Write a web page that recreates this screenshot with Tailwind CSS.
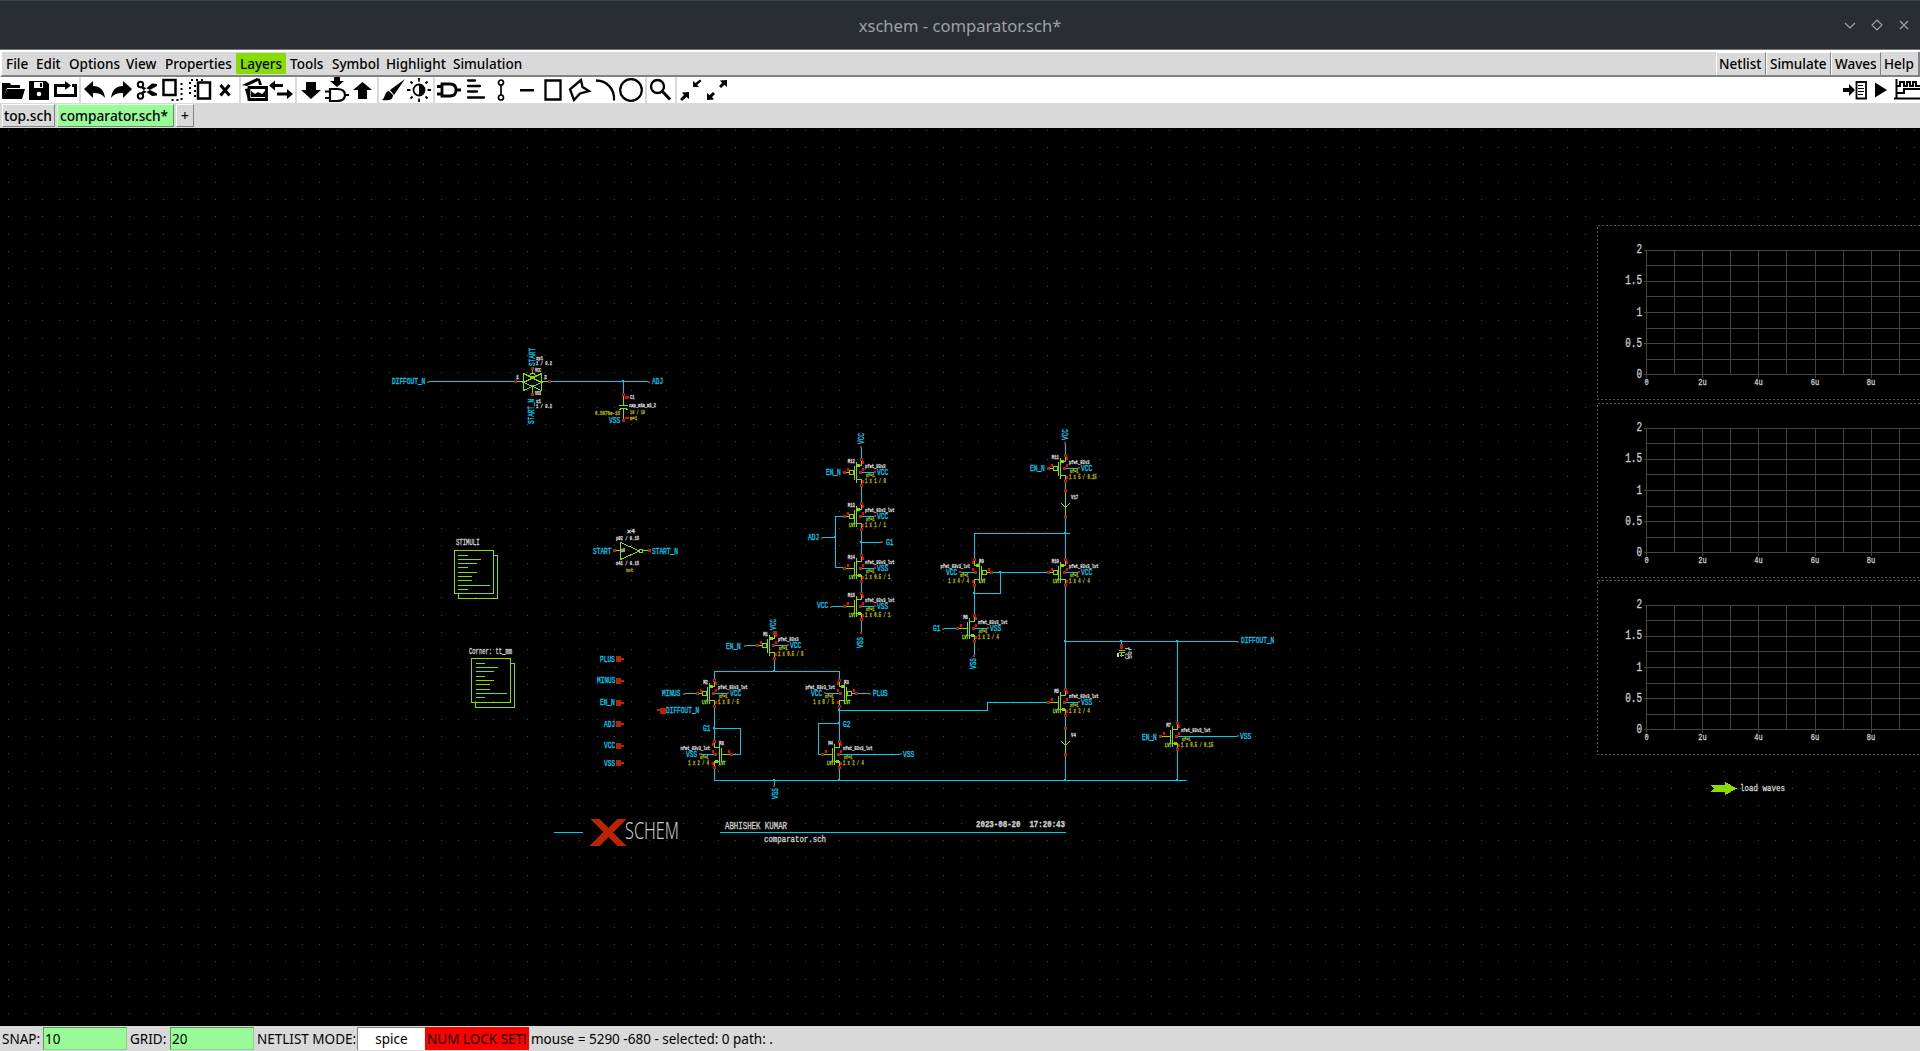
<!DOCTYPE html>
<html lang="en">
<head>
<meta charset="utf-8">
<title>xschem - comparator.sch*</title>
<script src="https://cdn.jsdelivr.net/npm/@tailwindcss/browser@4"></script>
</head>
<body class="w-[1920px] h-[1051px] overflow-hidden bg-[#d9d9d9] text-black flex flex-col font-['Noto_Sans',sans-serif]">

<header class="h-[49px] shrink-0 bg-[#2a2e32] border-t border-[#3b474d] flex items-center relative">
  <div class="w-full text-center text-[16.6px] text-[#9fa2a4] pt-px leading-[24px]">xschem - comparator.sch*</div>
  <svg class="absolute right-0 top-0 w-[80px] h-[48px]" viewBox="0 0 80 48" fill="none" stroke="#a3a6a8" stroke-width="1.1"><path d="M5 22l5 5 5-5M37 19l5 5-5 5-5-5zM60 20l8 8M68 20l-8 8"/></svg>
</header>
<div class="h-[3px] shrink-0 bg-white border-t border-[#6f7375]"></div>

<nav class="h-[25px] shrink-0 flex items-stretch border-b-2 border-[#828282] border-l-2 border-l-white text-[13.5px] font-medium whitespace-nowrap leading-[25px]">
  <span class="w-[30px] pl-[4px]">File</span>
  <span class="w-[32px] pl-[4px]">Edit</span>
  <span class="w-[57px] pl-[5px]">Options</span>
  <span class="w-[40px] pl-[5px]">View</span>
  <span class="w-[75px] pl-[4px]">Properties</span>
  <span class="w-[50px] pl-[4px] h-[21px] mt-px leading-[23px] bg-[#88dd00]">Layers</span>
  <span class="w-[41px] pl-[4px]">Tools</span>
  <span class="w-[55px] pl-[5px]">Symbol</span>
  <span class="w-[67px] pl-[4px]">Highlight</span>
  <span class="pl-[4px]">Simulation</span>
  <div class="ml-auto flex">
    <span class="w-[50px] pl-[2px] border-l border-t border-l-white border-t-white border-r border-r-[#828282] leading-[23px]">Netlist</span>
    <span class="w-[65px] pl-[3px] border-l border-t border-l-white border-t-white border-r border-r-[#828282] leading-[23px]">Simulate</span>
    <span class="w-[50px] pl-[3px] border-l border-t border-l-white border-t-white border-r border-r-[#828282] leading-[23px]">Waves</span>
    <span class="w-[39px] pl-[3px] border-r-2 border-r-[#828282]">Help</span>
  </div>
</nav>

<div id="toolbar" class="h-[26px] shrink-0 bg-white flex items-stretch"></div>

<div class="h-[25px] shrink-0 flex items-start pl-[2px] pt-px gap-[2px] text-[13.7px] font-medium leading-[21px] whitespace-nowrap">
  <span class="w-[53px] h-[23px] pl-px border-l border-t border-white border-r border-b border-r-[#828282] border-b-[#828282]">top.sch</span>
  <span class="w-[117px] h-[23px] pl-[2px] bg-[#98fb98] border-l border-t border-l-[#d8ffd8] border-t-[#d8ffd8] border-r border-b border-r-[#5b975b] border-b-[#5b975b]">comparator.sch*</span>
  <span class="w-[18px] h-[23px] text-center border-l border-t border-white border-r border-b border-r-[#828282] border-b-[#828282]">+</span>
</div>

<svg id="sheet" class="w-[1920px] h-[898px] shrink-0 bg-black block font-['Liberation_Mono',monospace]" viewBox="0 128 1920 898" shape-rendering="crispEdges" xml:space="preserve"></svg>

<footer class="h-[25px] shrink-0 flex items-center text-[13.5px] leading-[26px] whitespace-nowrap">
  <span class="w-[43px] pl-[2px]">SNAP:</span>
  <span class="w-[84px] h-[23px] pl-px bg-[#98fb98] border border-t-[#5b975b] border-l-[#5b975b] border-b-[#7fd87f] border-r-[#7fd87f] leading-[22px]">10</span>
  <span class="w-[43px] pl-[3px]">GRID:</span>
  <span class="w-[84px] h-[23px] pl-px bg-[#98fb98] border border-t-[#5b975b] border-l-[#5b975b] border-b-[#7fd87f] border-r-[#7fd87f] leading-[22px]">20</span>
  <span class="w-[103px] pl-[3px]">NETLIST MODE:</span>
  <span class="w-[68px] h-[23px] text-center bg-white border-t border-l border-[#828282] leading-[23px]">spice</span>
  <span class="w-[104px] h-[23px] pl-[2px] bg-[#ff0000] leading-[24px]">NUM LOCK SET!</span>
  <span class="pl-[2px]">mouse = 5290 -680 - selected: 0 path: .</span>
</footer>

<script>
// ---- toolbar icons, each on a 26x26 box ----
const S = 'fill="none" stroke="#000"';
const icons = {
  open:`<path d="M2 22V6h8l1 2h9v3H7L4 19z"/><path d="M7 12h18l-3 10H2z"/>`,
  save:`<path d="M3 4h17l3 3v16H3z"/><path fill="#fff" d="M8 5h9v6H8z"/><path d="M14 6h2v4h-2z"/><circle fill="#fff" cx="13" cy="17" r="2.3"/>`,
  reload:`<path ${S} stroke-width="3" d="M8 8.500H3.500V18.500H23.500V8.500H20M8 8.500h6"/><path d="M13 4l6 4.500-6 4.500z"/>`,
  undo:`<path d="M2 12l9-8v5c7 0 11 4 12 12-3-4-6-5-12-5v5z"/>`,
  redo:`<path d="M24 12l-9-8v5c-7 0-11 4-12 12 3-4 6-5 12-5v5z"/>`,
  cut:`<g ${S} stroke-width="2"><circle cx="6.500" cy="7.500" r="2.700"/><circle cx="6.500" cy="19" r="2.700"/></g><path d="M8 9l15 7.500v2l-5 .5L7 11zM8 17.500L23 9V7l-5-.5L7 15.500z"/>`,
  copy:`<path ${S} stroke-width="2.500" d="M3.500 3h12v15h-12z"/><path fill="none" stroke="#000" stroke-width="2" stroke-dasharray="2 3" d="M21.500 6v17H9"/>`,
  paste:`<path ${S} stroke-width="2.500" d="M12 5.500h12v16H12z"/><path ${S} stroke-width="2" stroke-dasharray="2 3" d="M17 3H4v16"/><path ${S} stroke-width="2" stroke-dasharray="2 3" d="M9 8v12"/>`,
  del:`<path ${S} stroke-width="3" d="M8.500 8l9 10.500M17.500 8l-9 10.500"/>`,
  schem:`<path d="M0 8L15 1l3 1 2 6h-3l-1-4-11 5z"/><path d="M3 12l3 11h2V11z"/><path ${S} stroke-width="2.800" d="M7 10.500h17.500v12H7z"/><path d="M9 20v-6l4 3 3-2 4 2 3-3v6z"/>`,
  swap:`<path d="M1 8.500l6-5V7h8v3H7v3.500zM25 17l-6-5v3.500H9v3h10V22z"/>`,
  down:`<path d="M8 5h10v8h5l-10 9-10-9h5z"/>`,
  godown:`<path d="M10 0h6v4h4l-7 6-7-6h4z"/><path ${S} stroke-width="2.200" d="M6 12h7q8 0 8 6t-8 6H6zM1 14.500h5M1 21h5M21 18h4"/>`,
  up:`<path d="M8 22h9v-9h5L12.500 5 3 13h5z"/>`,
  brush:`<path d="M25 2L10 13l4 5zM9 14c-5 1-3 6-7 9 6 1 11 0 11-5z"/>`,
  contrast:`<circle ${S} stroke-width="1.800" cx="13" cy="13" r="5.500"/><path d="M13 7a6 6 0 010 12z"/><path ${S} stroke-width="1.800" d="M13 1v3.500M13 21.500V25M1 13h3.500M21.500 13H25M4.500 4.500l2 2M19.500 19.500l2 2M21.500 4.500l-2 2M6.500 19.500l-2 2"/>`,
  gate:`<path ${S} stroke-width="2.800" d="M6 7h8q6 0 6 6t-6 6H6zM1 9.500h5M1 17h5M20 13h5"/>`,
  text:`<path ${S} stroke-width="2.300" d="M6 3.500h7M6 9h12M6 14.500h9M6 20.500h16" stroke-linecap="round"/>`,
  wire:`<g ${S} stroke-width="1.700"><circle cx="13" cy="5.500" r="2.500"/><circle cx="13" cy="20.500" r="2.500"/><path d="M13 8v10"/></g>`,
  line:`<path d="M6 12h14v2.500H6z"/>`,
  rect:`<path ${S} stroke-width="2.300" d="M5.500 3.500h15v19h-15z"/>`,
  poly:`<path ${S} stroke-width="2.300" d="M15 3L4 12.300l4 10.700 6-6.500 9-2.500-6.500-4z"/>`,
  arc:`<path ${S} stroke-width="2.300" d="M4 3.500c11 0 19 9 18 20"/>`,
  circle:`<circle ${S} stroke-width="2.200" cx="13" cy="13" r="10.800"/>`,
  zoom:`<circle ${S} stroke-width="2.400" cx="9.500" cy="9.500" r="6.500"/><path ${S} stroke-width="3" d="M14 14l8 8.500"/>`,
  zin:`<path d="M15 10V4l2.500 2L22 2.500l1.500 1.500L19 8l2 2zM11 15v7l-2.500-2L4 24l-2-2 4-4-2-2.500z"/>`,
  zout:`<path d="M23 3v7l-2.500-2.300L17 11l-2-2 3-3-2-2.500zM3 23v-7l2.500 2.300L9 15l2 2-3 3 2 2.500z"/>`,
  netlist:`<path d="M1 11h6V7l6 6-6 6v-4H1z"/><path ${S} stroke-width="1.800" d="M14.500 5h9.500v16.500H14.500z"/><path ${S} stroke-width="1.200" d="M16 8.500h5M16 11.500h6M16 14.500h6M16 17.500h5"/>`,
  play:`<path d="M7 5.500l12 7.500-12 7.500z"/>`,
  waves:`<path ${S} stroke-width="2" d="M2 9h4V5h4v4h3V5h3v4h3V5h3v4h4M2 16h8v-4h16M2.500 2v20M0 21.500h26"/>`
};
const ic = n => `<svg class="w-[26px] h-[26px] shrink-0" viewBox="0 0 26 26">${icons[n]}</svg>`;
document.getElementById('toolbar').innerHTML =
  [['open','save','reload'],['undo','redo','cut','copy','paste','del'],['schem','swap'],['down','godown','up'],
   ['brush','contrast'],['gate','text','wire','line','rect','poly','arc','circle'],['zoom'],['zin','zout']]
  .map(g => g.map(ic).join('')).join('<i class="w-[2px] mx-px bg-[#d9d9d9]"></i>')
  + `<div class="ml-auto flex">${['netlist','play','waves'].map(ic).join('')}</div>`;

// ---- schematic ----
const W='#00ccee', G='#88dd00', R='#ff0000', P='#bb2200', T='#cccccc', Y='#aaaa00', D='#444444';
let o='';
const ln=(c,...pts)=>{ let p=''; for(let i=0;i<pts.length;i+=2) p+=(i?'L':'M')+(pts[i]+.5)+' '+(pts[i+1]+.5);
  o+=`<path d="${p}" fill="none" stroke="${c}" stroke-linecap="square"/>`; };
const box=(c,x,y,w,h)=>{ o+=`<rect x="${x}" y="${y}" width="${w}" height="${h}" fill="${c}"/>`; };
const pin=(x,y,f)=>{ box(P,x-1,y-1,3,3); if(!f) box('#441100',x,y,1,1); };
// text spanning x..x+w, vertically centred on cy, with capital height h
const tx=(s,x,cy,w,h=6,c=T,wt=400)=>{ o+=`<text x="${x}" y="${cy+h/2}" font-size="${(h/.66).toFixed(2)}" font-weight="${wt}" fill="${c}" stroke="${c}" stroke-width=".35" textLength="${w}" lengthAdjust="spacingAndGlyphs" style="white-space:pre">${s}</text>`; };
const lab=(s,x,cy)=>tx(s,x,cy,s.length*3.7,6.2,W,400);
const vtx=(s,cx,yb,len)=>{ o+=`<text transform="translate(${cx+3} ${yb}) rotate(-90)" font-size="9.3" fill="${W}" stroke="${W}" stroke-width=".35" textLength="${len}" lengthAdjust="spacingAndGlyphs">${s}</text>`; };

// grid dots
let d=''; for(let j=0;j<52;j++) for(let i=0;i<111;i++) d+=`M${Math.floor(8+17.33*i)} ${Math.floor(130.05+17.33*j)}h1v1h-1z`;
o+=`<path d="${d}" fill="#4a4a4a"/>`;

// wires
[[428,381,515,381],[549,381,649,381],[623,381,623,394],
 [861,447,861,459],[861,485,861,503],[861,529,861,555],[861,581,861,593],[861,620,861,632],
 [822,537,835,537],[844,516,835,516,835,567,844,567],[861,542,882,542],[831,606,844,606],
 [974,559,974,533,1069,533],[974,585,974,615],[974,593,1000,593,1000,572],[991,572,1048,572],[943,628,956,628],[974,641,974,655],
 [1065,442,1065,455],[1065,481,1065,489],[1065,516,1065,559],[1065,585,1065,689],[1065,641,1238,641],[1121,641,1121,645],
 [1177,641,1177,723],[1177,749,1177,780],[1065,715,1065,728],[1065,754,1065,780],
 [839,710,987,710,987,702,1048,702],[714,780,1186,780],[774,780,774,785],
 [774,659,774,671],[714,680,714,671,839,671,839,680],[714,706,714,741],[714,728,740,728,740,754,731,754],
 [839,706,839,741],[839,723,818,723,818,754,822,754],[714,767,714,780],[839,767,839,780],
 [684,693,697,693],[857,693,870,693],[745,645,757,645]].forEach(a=>ln(W,...a));
[[861,542],[835,537],[1065,533],[974,593],[1000,572],[1065,641],[1121,641],[1177,641],[1065,780],[1177,780],[774,780],[839,780],[774,671],[714,728],[839,723],[839,710],[623,381]]
  .forEach(([x,y])=>box(W,x-1,y-1,2,2));
// wire-end markers
[[428,381],[649,381],[861,446],[861,632],[822,537],[882,541],[831,606],[943,628],[974,655],[1065,442],[1238,641],[774,785],[684,693],[870,693],[745,645]]
  .forEach(([x,y])=>box(P,x-1,y,2,2));

// MOS transistor: drain/source column at x, gate row at y, f = mirrored
function mos(x,y,t,f,name,model,size,bulk,len=14,fill=0){
  const s=f?-1:1, X=v=>x+s*v;
  ln(G,x,y-12,x,y-7,X(-4),y-7); ln(G,x,y+12,x,y+7,X(-4),y+7);
  ln(G,X(-5),y-10,X(-5),y+10); ln(G,X(-7),y-6,X(-7),y+7);
  if(t=='p'){ ln(G,X(-17),y,X(-13),y); o+=`<circle cx="${X(-10)+.5}" cy="${y+.5}" r="2.300" fill="none" stroke="${G}"/>`; box(G,X(-3)-1,y-8,3,3); }
  else { ln(G,X(-17),y,X(-7),y); box(G,X(-2)-1,y+6,3,3); }
  const bs=f?-1:1;
  ln(W,x,y,x+bs*len,y);
  pin(x,y-13); pin(x,y+13); pin(X(-17),y,fill); pin(X(1)-s*2,y,1); box(P,x+bs*len-1,y-1,2,2);
  box(R,X(1)-(f?1:0),y-11,2,3); box(R,X(1)-(f?1:0),y-4,2,3); box(R,X(1)-(f?1:0),y+8,2,3); box(R,X(-14),y-4,2,3);
  if(/lvt/.test(model)) tx('LVT',f?x+5:x-12,y+9.500,6.5,3,G,700);
  tx(name,f?x+5:x-6-name.length*2.4,y-11,name.length*2.4,4,T,700);
  const mw=model.length*2.27, sw=size.length*2.3;
  tx(model,f?x-4-mw:x+4,y-6,mw,4,T,700);
  tx('nf=1',f?x-14:x+5,y+3,8.5,3.5,Y,700);
  tx(size,f?x-5-sw:x+4,y+8.5,sw,4.3,Y,700);
  if(f) lab(bulk,x-28,y-.5); else lab(bulk,x+len+2,y);
}
const PL='pfet_03v3_lvt', NL='nfet_03v3_lvt';
mos(861,472,'p',0,'M12','pfet_03v3','1 x 1 / 8','VCC',14,1);
mos(861,516,'p',0,'M13',PL,'1 x 1 / 1','VCC');
mos(861,568,'n',0,'M14',NL,'1 x 0.5 / 1','VSS');
mos(861,606,'n',0,'M15',NL,'1 x 0.5 / 1','VSS');
mos(974,572,'p',1,'M9',PL,'1 x 4 / 4','VCC');
mos(974,628,'n',0,'M6',NL,'1 x 2 / 4','VSS');
mos(1065,468,'p',0,'M11','pfet_03v3','1 x 5 / 0.15','VCC',14,1);
mos(1065,572,'p',0,'M10',PL,'1 x 4 / 4','VCC');
mos(1065,702,'n',0,'M5',NL,'1 x 2 / 4','VSS');
mos(1177,736,'n',0,'M7',NL,'1 x 0.5 / 0.15','VSS',61,1);
mos(774,645,'p',0,'M1','pfet_03v3','1 x 0.5 / 8','VCC');
mos(714,693,'p',0,'M2',PL,'1 x 8 / 5','VCC');
mos(839,693,'p',1,'M3',PL,'1 x 8 / 5','VCC');
mos(714,754,'n',1,'M8',NL,'1 x 2 / 4','VSS');
mos(839,754,'n',0,'M4',NL,'1 x 2 / 4','VSS',62);

// net labels
[['DIFFOUT_N',392,381],['ADJ',652,381],['EN_N',826,472],['ADJ',808,537],['G1',886,542],['VCC',817,605],
 ['EN_N',1030,468],['G1',933,628],['G2',843,724],['G1',703,728],['PLUS',873,693],['DIFFOUT_N',1241,640],
 ['EN_N',1142,737],['EN_N',726,646],['MINUS',662,693],['DIFFOUT_N',666,710],['VSS',609,420],
 ['START',593,550.5],['START_N',652,550.5],
 ['PLUS',600,658.5],['MINUS',597,680],['EN_N',600,702],['ADJ',604,723.5],['VCC',604,745],['VSS',604,762.5]].forEach(a=>lab(...a));
vtx('VCC',861,444,11); vtx('VSS',860,648,11); vtx('VCC',1065,440,11); vtx('VSS',973,669,11);
vtx('VCC',773,630,11); vtx('VSS',775,799,11); vtx('START',532,366,18); vtx('START_N',531,424,25);
// ports
[658,680,702,723,745,762].forEach(y=>{ box(P,616,y-2,5,6); box(P,619,y,5,2); });
box(P,660,708,6,6); box(P,657,709,4,2);
box(P,773,631,4,4);

// current probes
[[490,'V17',497],[728,'V4',735]].forEach(([y,n,ty])=>{ ln(G,1065,y,1065,y+25); ln(G,1061,y+13,1065,y+17,1069,y+13);
  pin(1065,y,1); pin(1065,y+26,1); tx(n,1071,ty,n.length*2.4,4,T,700); });

// output capacitor
pin(1121,645,1); pin(1121,647,1); ln(G,1119,650,1124,650); ln(G,1119,652,1124,652); ln(G,1121,652,1121,656); ln(G,1120,655,1123,655);
box(T,1117,653,2,4);
o+=`<text transform="translate(1129 659) rotate(-90)" font-size="5.500" font-weight="700" fill="${T}" textLength="12" lengthAdjust="spacingAndGlyphs">C2 1</text><text transform="translate(1132 659) rotate(-90)" font-size="5" font-weight="700" fill="${T}" textLength="12" lengthAdjust="spacingAndGlyphs">50f</text>`;

// transmission gate
ln(G,515,381,523,381); ln(G,541,381,549,381); ln(G,523,373,523,390); ln(G,541,373,541,390);
ln(G,523,373,541,382,523,390); ln(G,541,373,523,382,541,390); ln(G,532,387,532,394); ln(G,532,368,532,372); ln(G,529,376,530,373,534,373,535,376,529,376);
box(G,531,385,3,2);
pin(532,368,1); pin(532,394,1); pin(515,381); pin(549,381);
tx('xp1',536,358,7,4,T,700); tx('1 / 0.2',536,363,16,4,T,700); tx('VCC',535,370,6,3,T,700); tx('1',516,377,3,4,T,700); tx('2',544,377,3,4,T,700);
tx('VSS',535,393,6,3,T,700); tx('x1',536,401,5,4,T,700); tx('1 / 0.2',536,406,16,4,T,700);
// load capacitor
pin(623,394); pin(623,420,1); ln(G,623,396,623,405); ln(G,619,405,627,405); ln(G,619,409,621,408,625,408,627,409); ln(G,623,408,623,418);
box(R,625,396,4,3); box(R,625,417,4,2); tx('C1',630,397,4.5,4,T,700); tx('cap_mim_m3_2',629,405,27,3.5,T,700);
tx('6.5676e-15',595,413,25,4,Y,700); tx('10 / 10',630,412,15,4,Y,700); tx('m=1',630,418,7,3.5,Y,700);
// inverter
ln(G,615,550,620,550); ln(G,620,542,620,559,638,551,638,550,620,542); o+=`<circle cx="641" cy="551" r="1.800" fill="none" stroke="${G}"/>`; ln(G,643,550,648,550);
pin(614,550,1); pin(649,550,1); tx('x4',627,531,8,4,T,700); tx('p82 / 0.15',616,538,23,4,T,700); tx('n41 / 0.15',616,563,23,4,T,700);
tx('not',626,570,7,4,Y,700); tx('x0',621,550,4,3.5,T,700);

// code blocks
function sheet(x,y,h,ends,rows){
  ln(G,x,y,x+39,y,x+39,y+h,x,y+h,x,y); ln(G,x+39,y+5,x+43,y+5,x+43,y+h+5,x+4,y+h+5,x+4,y+h);
  rows.forEach((r,i)=>ln(G,x+(x>460?5:4),r,ends[i],r));
}
tx('STIMULI',456,542.5,23.5,5.5,T,400); sheet(454,550,43,[467,480,476,467,476,471,471,489,467],[555,559,563,567,572,576,580,585,589]);
tx('Corner: tt_mm',469,651,43,5.5,T,400); sheet(471,658,44,[484,497,493,484,493,489,489,506,484],[663,667,671,676,680,684,689,693,697]);

// title block
ln(W,554,832,582,832); ln(W,720,832,1065,832);
o+=`<path fill="${P}" d="M590 819h9l9 9 9-9h9l-13 13 13 14h-9l-9-9-9 9h-9l13-14z"/>`;
o+=`<g fill="${T}" class="font-['Noto_Sans',sans-serif]"><text x="625" y="839" font-size="23" font-weight="300" textLength="54" lengthAdjust="spacingAndGlyphs">SCHEM</text></g>`;
tx('ABHISHEK KUMAR',725,825.5,62,7,T); tx('comparator.sch',764,838.5,62,6.5,T); tx('2023-08-20  17:20:43',976,824,89,5.5,T,700);

// waveform graphs
[0,178,355].forEach(k=>{
  box('#000',1597,225+k,323,175);
  o+=`<path d="M1920 ${225.5+k}H1597.500V${399.5+k}H1920" fill="none" stroke="#555" stroke-dasharray="2 2"/>`;
  [1646,1674,1702,1730,1758,1786,1815,1843,1871,1899].forEach((x,i)=>ln(D,x,250+k,x,(i%2?374:377)+k));
  [250,265,281,296,312,328,343,359,374].forEach((y,i)=>ln(D,i%2?1646:1644,y+k,1920,y+k));
  ['2','1.5','1','0.5','0'].forEach((s,i)=>tx(s,1642-s.length*5.6,[248,279.5,311,342,373][i]+k,s.length*5.6,9,T));
  ['0','2u','4u','6u','8u'].forEach((s,i)=>tx(s,[1646.5,1702.5,1758.5,1815,1871][i]-s.length*2.1,381.5+k,s.length*4.2,6.5,T));
});
o+=`<path fill="${G}" d="M1711 785h14v-3l12 6.500-12 6.500v-3h-14l3-3.500z"/>`;
tx('load waves',1740,788,45,6.5,T);

document.getElementById('sheet').innerHTML=o;
</script>
</body>
</html>
